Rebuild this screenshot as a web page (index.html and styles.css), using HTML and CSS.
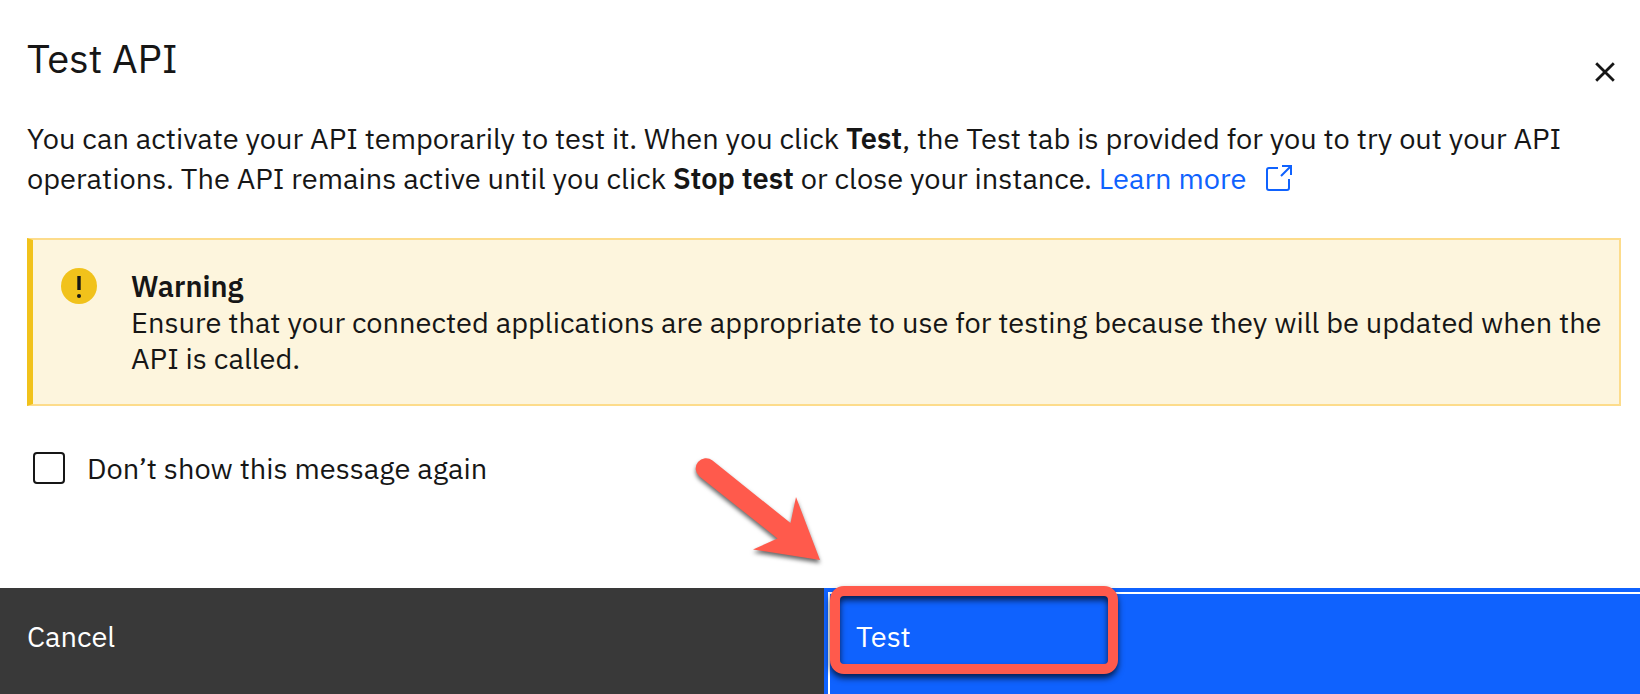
FILE: index.html
```html
<!DOCTYPE html>
<html lang="en">
<head>
  <meta charset="utf-8">
  <meta name="viewport" content="width=device-width, initial-scale=1">
  <title>Test API</title>
  <link rel="stylesheet" href="styles.css">
</head>
<body>
  <main class="modal" role="dialog" aria-labelledby="modal-title">
    <header class="modal-header">
      <h1 class="modal-title" id="modal-title">Test API</h1>
      <button class="close-button" type="button" aria-label="Close">
        <svg class="close-icon" viewBox="0 0 20 20" aria-hidden="true">
          <path d="M1.2 1.2 18.8 18.8M18.8 1.2 1.2 18.8" fill="none" stroke="currentColor" stroke-width="2.8"/>
        </svg>
      </button>
    </header>

    <div class="modal-content">
      <p class="intro">You can activate your API temporarily to test it. When you click <strong>Test</strong>, the Test tab is provided for you to try out your API operations. The API remains active until you click <strong>Stop test</strong> or close your instance. <a class="link" href="#">Learn more<svg class="link-icon" viewBox="0 0 26 26" aria-hidden="true">
        <path d="M12 3H3a2 2 0 0 0-2 2v18a2 2 0 0 0 2 2h18a2 2 0 0 0 2-2v-9" fill="none" stroke="currentColor" stroke-width="2"/>
        <path d="M16 1h9v9M25 1 15 11" fill="none" stroke="currentColor" stroke-width="2"/>
      </svg></a></p>

      <section class="notice">
        <svg class="notice-icon" viewBox="0 0 36 36" aria-hidden="true">
          <circle cx="18" cy="18" r="18" fill="#f1c21b"/>
          <path d="M16.300 8h3.400v14h-3.400z" fill="#161616"/>
          <circle cx="18" cy="28" r="2" fill="#161616"/>
        </svg>
        <div class="notice-text">
          <h2 class="notice-title">Warning</h2>
          <p class="notice-body">Ensure that your connected applications are appropriate to use for testing because they will be updated when the API is called.</p>
        </div>
      </section>

      <div class="option">
        <input class="checkbox" type="checkbox" id="hide-message">
        <label for="hide-message">Don’t show this message again</label>
      </div>
    </div>

    <footer class="modal-footer">
      <button class="button button-secondary" type="button">Cancel</button>
      <div class="primary-cell">
        <button class="button button-primary" type="button">Test</button>
        <span class="highlight"></span>
        <svg class="arrow" viewBox="0 0 140 120" aria-hidden="true">
          <path d="M22.500 8.500 100.500 71 106 45 130 108 63 97.500 87.500 86.500 9.500 24.500A10.200 10.200 0 0 1 22.500 8.500Z" fill="#ff5a4c"/>
        </svg>
      </div>
    </footer>
  </main>
</body>
</html>
```
FILE: styles.css
```css
* {
  box-sizing: border-box;
}

body {
  margin: 0;
  background: #fff;
  color: #161616;
  font-family: "IBM Plex Sans", "Noto Sans", sans-serif;
  font-size: 29px;
  line-height: 36px;
}

h1,
h2,
p {
  margin: 0;
}

button {
  border: 0;
  font: inherit;
  cursor: pointer;
}

.modal {
  display: flex;
  flex-direction: column;
  min-height: 100vh;
}

.modal-header {
  display: flex;
  justify-content: space-between;
  align-items: flex-start;
  padding: 30px 19px 0 27px;
}

.modal-title {
  font-size: 40px;
  font-weight: 400;
  line-height: 56px;
}

.close-button {
  display: flex;
  margin-top: 26px;
  padding: 6px;
  background: none;
  color: #161616;
}

.close-icon {
  width: 20px;
  height: 20px;
}

.modal-content {
  flex: 1;
  padding: 30px 19px 0 27px;
}

.intro {
  line-height: 40px;
  padding-right: 30px;
}

strong,
.notice-title {
  font-weight: 600;
}

.link {
  color: #0f62fe;
  text-decoration: none;
}

.link-icon {
  width: 26px;
  height: 26px;
  margin-left: 20px;
  vertical-align: -2px;
}

.notice {
  display: flex;
  gap: 34px;
  margin-top: 40px;
  padding: 28px 12px 28px 28px;
  border: 2px solid #fddc8b;
  border-left: 6px solid #f1c21b;
  background: #fdf5dd;
}

.notice-icon {
  flex: none;
  width: 36px;
  height: 36px;
}

.notice-title {
  font-size: inherit;
}

.option {
  display: flex;
  align-items: center;
  gap: 22px;
  margin: 44px 0 40px 6px;
}

.checkbox {
  appearance: none;
  flex: none;
  width: 32px;
  height: 32px;
  margin: 0;
  border: 2px solid #161616;
  border-radius: 4px;
  background: #fff;
}

.checkbox:checked {
  background: #161616;
}

.modal-footer {
  display: grid;
  grid-template-columns: 101fr 100fr;
}

.button {
  width: 100%;
  padding: 30px 32px 40px 27px;
  color: #fff;
  text-align: left;
}

.button-secondary {
  background: #393939;
}

.primary-cell {
  position: relative;
  display: grid;
}

.button-primary {
  padding-left: 32px;
  background: #0f62fe;
  box-shadow: inset 4px 4px 0 #0f62fe, inset 6px 6px 0 #fff;
}

.highlight {
  position: absolute;
  top: -2px;
  left: 6px;
  width: 288px;
  height: 88px;
  border: 10px solid #ff5a4c;
  border-radius: 14px;
  filter: drop-shadow(0 4px 3px rgba(0, 0, 0, 0.7));
  pointer-events: none;
}

.arrow {
  position: absolute;
  top: -136px;
  left: -134px;
  width: 140px;
  height: 120px;
  filter: drop-shadow(0 3px 2px rgba(0, 0, 0, 0.6));
  overflow: visible;
  pointer-events: none;
}
```
